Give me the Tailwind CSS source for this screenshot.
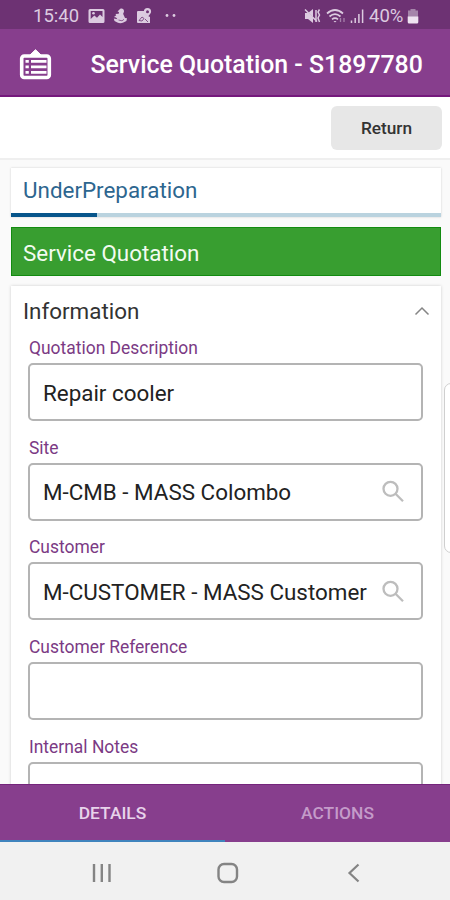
<!DOCTYPE html>
<html lang="en">
<head>
<meta charset="utf-8">
<title>Service Quotation</title>
<script src="https://cdn.jsdelivr.net/npm/@tailwindcss/browser@4"></script>
</head>
<body class="bg-[#fafafa]">
<div class="relative flex h-[900px] w-[450px] flex-col overflow-hidden bg-[#fafafa] font-[Roboto,sans-serif] whitespace-nowrap">
  <!-- Status bar -->
  <div class="flex h-[29px] shrink-0 items-center bg-[#6d3273] pt-[3px] pl-[33px] text-[#dccbe0]">
    <span class="w-[55px] text-[18.5px] leading-none">15:40</span>
    <svg class="h-[16px] w-[17px]" viewBox="0 0 17 16" fill="currentColor"><path fill-rule="evenodd" d="M2 1h13a1.500 1.500 0 0 1 1.500 1.500v11A1.500 1.500 0 0 1 15 15H2A1.500 1.500 0 0 1 .5 13.500v-11A1.500 1.500 0 0 1 2 1zm.7 2v8l3.600-3.500 2.700 2.300 3-3.300 2.500 2.500V3z"/><circle cx="5.500" cy="5.200" r="1.300"/></svg>
    <svg class="ml-[8px] h-[16px] w-[15px]" viewBox="0 0 15 16" fill="currentColor"><path d="M7 1c2-1 4 0 4 2.200 0 1.300-.8 1.800-.8 2.800l1.800 4 2 .3-.6 2.700-3 1.600c-2 .9-4 .9-6 0L1.500 13 .8 10.500l3.700.8L3 9.500 1 9l2.200-1.800L2.500 6l3.200-.3L6 4 4.500 3.500z"/><path d="M5.500 12l3.500.8 2-1.500" fill="none" stroke="#6d3273" stroke-width=".7"/></svg>
    <svg class="ml-[8px] h-[18px] w-[17px]" viewBox="0 0 17 18"><path d="M2 4h7l1 4 4 2v6H2a1 1 0 0 1-1-1V5a1 1 0 0 1 1-1z" fill="currentColor"/><path d="M3 13.500l3-3.500 2 1.500-2 2.500zM9 12l3 3" fill="none" stroke="#6d3273" stroke-width=".8"/><path d="M11.500 1a3.700 3.700 0 0 1 3.600 3.700c0 2-2.100 3-3.600 5.800-1.500-2.800-3.600-3.800-3.600-5.800A3.700 3.700 0 0 1 11.500 1z" fill="currentColor"/><circle cx="11.500" cy="4.700" r="1.500" fill="#6d3273"/></svg>
    <svg class="ml-[12px] h-[6px] w-[12px]" viewBox="0 0 12 6" fill="currentColor"><circle cx="2" cy="2.500" r="1.400"/><circle cx="9" cy="2.500" r="1.400"/></svg>
    <svg class="ml-[127px] h-[16px] w-[18px]" viewBox="0 0 18 16"><path d="M1 5h3l5-4v14l-5-4H1z" fill="currentColor"/><path d="M1 1l13 13" stroke="#6d3273" stroke-width=".7"/><path d="M1 1.500l12 12M12 2v12M15.500 1.500l-1.500 2.500 1.500 3-1.500 3 1.500 4" fill="none" stroke="currentColor" stroke-width="1.500"/></svg>
    <svg class="ml-[4px] h-[16px] w-[21px]" viewBox="0 0 21 16" fill="none" stroke="currentColor" stroke-width="1.700"><path d="M1 5.500q8-7 16 0M3.500 8.500q5.500-4.800 11 0M6 11.300q3-2.500 6 0"/><path d="M7.500 13h3L9 14.500z" fill="currentColor" stroke="none"/><path d="M14.500 10v4M18 10v4" stroke-width="1.300" opacity=".5"/></svg>
    <svg class="ml-[3px] h-[16px] w-[14px]" viewBox="0 0 14 16" stroke="currentColor" stroke-width="1.500"><path d="M1.500 12.500V15M5.200 10v5M8.900 6v9M12.600 1.500V15"/></svg>
    <span class="ml-[5px] w-[38px] text-[18.500px] leading-none">40%</span>
    <svg class="h-[16px] w-[12px]" viewBox="0 0 12 16"><path d="M3.500 1h5v1.500H11V9H1V2.500h2.500z" fill="#a585aa"/><path d="M.7 8.500h10.600V14q0 1.500-1.500 1.500H2.200Q.7 15.500.7 14z" fill="#eee3f0"/></svg>
  </div>
  <!-- App bar -->
  <header class="flex h-[68px] shrink-0 items-center border-b-2 border-[#75187c] bg-[#873e8d] pt-[5px] pl-[19px] text-white">
    <svg class="h-[32px] w-[34px]" viewBox="0 0 34 32"><path d="M11 6l5.500-5.300L22 6z" fill="white" stroke="white" stroke-linejoin="round"/><rect x="2.700" y="7" width="27.600" height="21.500" rx="2.500" fill="none" stroke="white" stroke-width="3.600"/><path d="M6.500 12.300h3.300M6.500 17.800h3.300M6.500 23.300h3.300M12 12.300h15.500M12 17.800h15.500M12 23.300h15.500" stroke="white" stroke-width="2.800"/></svg>
    <h1 class="ml-[37.5px] pt-[2px] text-[24.85px] leading-none font-medium">Service Quotation - S1897780</h1>
  </header>
  <!-- Toolbar -->
  <div class="flex h-[63px] shrink-0 items-start justify-end border-b-2 border-[#efefef] bg-white pt-[9px] pr-[8px]">
    <button class="h-[44px] w-[111px] rounded-[6px] bg-[#e7e7e7] pt-[2px] text-[17.3px] font-medium text-[#333]">Return</button>
  </div>
  <main class="flex min-h-0 flex-1 flex-col overflow-hidden pt-[8px] pr-[9px] pl-[11px]">
    <section class="flex h-[49px] shrink-0 flex-col bg-white shadow-[0_0_2px_rgba(0,0,0,0.18)]">
      <div class="flex flex-1 items-center pl-[12px] text-[22.4px] leading-none text-[#2d668f]">UnderPreparation</div>
      <div class="h-[4px] bg-[#bad3df]"><div class="h-full w-[86px] bg-[#07558b]"></div></div>
    </section>
    <div class="mt-[10px] flex h-[49px] shrink-0 items-center border border-[#128b10] bg-[#389e30] pt-[3px] pl-[11px] text-[22.4px] leading-none text-[#f2fbf0]">Service Quotation</div>
    <section class="mt-[10px] flex h-[560px] shrink-0 flex-col bg-white px-[18px] shadow-[0_0_3px_rgba(0,0,0,0.18)]">
      <div class="-mx-[6px] flex h-[51px] shrink-0 items-center justify-between text-[22.4px] leading-none text-[#333]">
        <span>Information</span>
        <svg class="mr-[-1px] mb-[2px] h-[10px] w-[16px]" viewBox="0 0 16 10" fill="none" stroke="#858585" stroke-width="1.500"><path d="M1.500 8.500L8 2l6.500 6.500"/></svg>
      </div>
      <div class="-ml-px flex flex-col">
        <div class="h-[99.7px]"><div class="flex h-[26px] items-start pt-[3px] pl-[1px] text-[17.45px] leading-[17px] text-[#7b3a84]">Quotation Description</div><div class="flex h-[58px] items-center rounded-[5px] border-2 border-[#b4b4b4] px-[13px] pt-[4px] text-[22.4px] text-[#222]">Repair cooler</div></div>
        <div class="h-[99.7px]"><div class="flex h-[26px] items-start pt-[3px] pl-[1px] text-[17.45px] leading-[17px] text-[#7b3a84]">Site</div><div class="flex h-[58px] items-center justify-between rounded-[5px] border-2 border-[#b4b4b4] pt-[3px] pr-[16px] pl-[13px] text-[22.4px] text-[#222]">M-CMB - MASS Colombo<svg class="-mt-[3px] h-[23px] w-[24px] shrink-0" viewBox="0 0 24 23" fill="none" stroke="#bdbdbd" stroke-width="2.300"><circle cx="9.500" cy="8.800" r="7"/><path d="M14.500 13.800l7.500 7.500"/></svg></div></div>
        <div class="h-[99.7px]"><div class="flex h-[26px] items-start pt-[3px] pl-[1px] text-[17.45px] leading-[17px] text-[#7b3a84]">Customer</div><div class="flex h-[58px] items-center justify-between rounded-[5px] border-2 border-[#b4b4b4] pt-[3px] pr-[16px] pl-[13px] text-[22.4px] text-[#222]">M-CUSTOMER - MASS Customer<svg class="-mt-[3px] h-[23px] w-[24px] shrink-0" viewBox="0 0 24 23" fill="none" stroke="#bdbdbd" stroke-width="2.300"><circle cx="9.500" cy="8.800" r="7"/><path d="M14.500 13.800l7.500 7.500"/></svg></div></div>
        <div class="h-[99.7px]"><div class="flex h-[26px] items-start pt-[3px] pl-[1px] text-[17.45px] leading-[17px] text-[#7b3a84]">Customer Reference</div><div class="h-[58px] rounded-[5px] border-2 border-[#b4b4b4]"></div></div>
        <div class="h-[99.7px]"><div class="flex h-[26px] items-start pt-[3px] pl-[1px] text-[17.45px] leading-[17px] text-[#7b3a84]">Internal Notes</div><div class="h-[58px] rounded-[5px] border-2 border-[#b4b4b4]"></div></div>
      </div>
    </section>
  </main>
  <!-- Tabs -->
  <nav class="grid h-[58px] shrink-0 grid-cols-2 border-t border-[#75257c] bg-[#873e8d] text-center text-[17.4px] leading-[55px] font-medium">
    <div class="border-b-2 border-[#3f84bd] pt-px leading-[54px] text-[#e7d3ea]">DETAILS</div>
    <div class="pt-px leading-[54px] text-[#c49bc9]">ACTIONS</div>
  </nav>
  <!-- System navigation -->
  <div class="flex h-[58px] shrink-0 items-center bg-[#f1f1f1] pt-[3px] pl-[92px] text-[#848484]">
    <svg class="h-[20px] w-[20px]" viewBox="0 0 20 20" stroke="currentColor" stroke-width="2.400"><path d="M2 1v18M9.800 1v18M17.500 1v18"/></svg>
    <svg class="ml-[105px] h-[22px] w-[22px]" viewBox="0 0 22 22" fill="none" stroke="currentColor" stroke-width="2.400"><rect x="1.500" y="2" width="18.500" height="18" rx="5.500"/></svg>
    <svg class="ml-[108px] h-[20px] w-[14px]" viewBox="0 0 14 20" fill="none" stroke="currentColor" stroke-width="2.200"><path d="M11.500 1.500L2.500 10l9 8.500"/></svg>
  </div>
  <!-- Edge panel handle -->
  <div class="absolute top-[383px] left-[444px] h-[170px] w-[14px] rounded-[8px] border-[1.500px] border-[#cfcfcf] bg-white"></div>
</div>
</body>
</html>
